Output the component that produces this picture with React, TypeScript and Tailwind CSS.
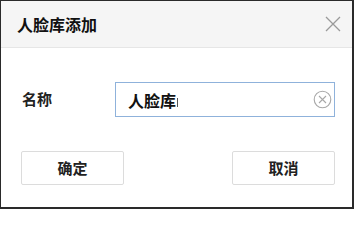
const font = { fontFamily: '"Noto Sans CJK SC", "Noto Sans", sans-serif' };

const CloseIcon = () => (
  <svg width="16" height="16" viewBox="0 0 16 16" className="text-[#9a9a9a]">
    <path d="M1 1L15 15M15 1L1 15" stroke="currentColor" strokeWidth="1.3" fill="none" />
  </svg>
);

const ClearIcon = () => (
  <svg width="19" height="19" viewBox="0 0 19 19" className="text-[#a8a8a8]">
    <circle cx="9.5" cy="9.5" r="8.3" stroke="currentColor" strokeWidth="1.1" fill="none" />
    <path d="M6 6L13 13M13 6L6 13" stroke="currentColor" strokeWidth="1.1" fill="none" />
  </svg>
);

export default function App() {
  return (
    <div
      className="flex h-[209px] w-[354px] flex-col overflow-hidden border-t border-l border-r-2 border-b-2 border-[#2a2a2a] bg-white"
      style={font}
    >
      <div className="flex h-[47px] shrink-0 items-center justify-between border-b border-[#e6e6e6] bg-[#f5f5f5] pl-[16px] pr-[11px]">
        <span className="text-[16px] font-bold leading-none text-[#111]">人脸库添加</span>
        <CloseIcon />
      </div>

      <div className="flex flex-1 flex-col pl-[20px] pr-[17px]">
        <div className="mt-[34px] flex items-center">
          <span className="w-[94px] shrink-0 pl-[1px] text-[15px] font-semibold text-[#222]">名称</span>
          <div className="flex h-[35px] w-[220px] shrink-0 items-center justify-between border border-[#8fb2db] pl-[12px] pr-[2px]">
            <span className="flex items-center text-[16px] font-semibold text-[#111]">
              人脸库
              <span className="ml-[1px] mt-[6px] h-[9px] w-px bg-[#555]" />
            </span>
            <ClearIcon />
          </div>
        </div>

        <div className="mt-[34px] flex justify-between">
          <button className="h-[34px] w-[103px] rounded-[2px] border border-[#dcdcdc] bg-white text-[15px] font-semibold text-[#222]">
            确定
          </button>
          <button className="h-[34px] w-[103px] rounded-[2px] border border-[#dcdcdc] bg-white text-[15px] font-semibold text-[#222]">
            取消
          </button>
        </div>
      </div>
    </div>
  );
}
